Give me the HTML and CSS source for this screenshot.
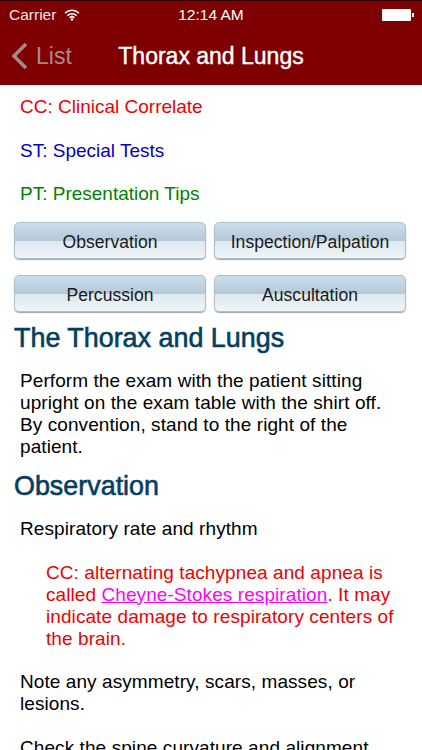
FILE: index.html
```html
<!DOCTYPE html>
<html lang="en">
<head>
<meta charset="utf-8">
<title>Thorax and Lungs</title>
<link rel="stylesheet" href="styles.css">
</head>
<body>
<div class="screen">
  <header class="top">
    <div class="status">
      <div class="status-left">
        <span>Carrier</span>
        <svg class="wifi" width="16" height="12" viewBox="0 0 16 12"><path d="M1 4.2a10 10 0 0 1 14 0M3.4 6.6a6.6 6.6 0 0 1 9.2 0M5.6 8.8a3.4 3.4 0 0 1 4.8 0" fill="none" stroke="#fff" stroke-width="1.5"/><path d="M8 12l-1.6-1.8a2.2 2.2 0 0 1 3.2 0z" fill="#fff"/></svg>
      </div>
      <span class="clock">12:14 AM</span>
      <div class="battery"><span class="cell"></span><span class="nub"></span></div>
    </div>
    <nav class="nav">
      <div class="back">
        <svg width="17" height="28" viewBox="0 0 17 28"><path d="M15 2L3 14l12 12" fill="none" stroke="#a88a8a" stroke-width="3.4"/></svg>
        <span>List</span>
      </div>
      <h1>Thorax and Lungs</h1>
    </nav>
  </header>
  <main class="content">
    <p class="key red">CC: Clinical Correlate</p>
    <p class="key blue">ST: Special Tests</p>
    <p class="key green">PT: Presentation Tips</p>
    <div class="buttons">
      <a class="btn">Observation</a>
      <a class="btn">Inspection/Palpation</a>
      <a class="btn">Percussion</a>
      <a class="btn">Auscultation</a>
    </div>
    <h2 class="first">The Thorax and Lungs</h2>
    <p class="body">Perform the exam with the patient sitting upright on the exam table with the shirt off. By convention, stand to the right of the patient.</p>
    <h2>Observation</h2>
    <p class="body">Respiratory rate and rhythm</p>
    <p class="body note">CC: alternating tachypnea and apnea is called <a class="link">Cheyne-Stokes respiration</a>. It may indicate damage to respiratory centers of the brain.</p>
    <p class="body">Note any asymmetry, scars, masses, or lesions.</p>
    <p class="body">Check the spine curvature and alignment</p>
  </main>
</div>
</body>
</html>
```
FILE: styles.css
```css
* { box-sizing: border-box; }
html, body { margin: 0; padding: 0; }
body { background: #fff; font-family: "Liberation Sans", Arial, sans-serif; }
.screen { width: 422px; height: 750px; overflow: hidden; background: #fff; }
.top { height: 85px; background: #7f0000; border-top: 1px solid #2a0000; color: #fff; }
.status { height: 27px; display: flex; justify-content: space-between; align-items: center; padding: 0 8px 0 9px; position: relative; font-size: 15.5px; }
.status-left { display: flex; align-items: center; gap: 8px; color: #f0e4e4; }
.clock { position: absolute; left: 0; right: 0; text-align: center; top: 5px; }
.battery { display: flex; align-items: center; }
.cell { width: 29px; height: 12px; background: #fff; border-radius: 1px; }
.nub { width: 2px; height: 4px; background: #fff; margin-left: 1px; }
.nav { height: 57px; display: flex; align-items: center; position: relative; padding: 0 0 1px 11px; }
.back { display: flex; align-items: center; gap: 8px; color: #a88a8a; font-size: 23px; }
.nav h1 { position: absolute; left: 0; right: 0; margin: 0; text-align: center; font-size: 23px; font-weight: 400; -webkit-text-stroke: 0.4px #fff; }
.content { padding: 11px 20px 0 20px; color: #000; }
.key { margin: 0 0 22px; font-size: 19px; line-height: 21.5px; }
.red { color: #f00000; }
.blue { color: #0000c8; }
.green { color: #008000; }
.buttons { display: grid; grid-template-columns: 192px 192px; column-gap: 8px; row-gap: 16px; margin: -5px 0 0 -6px; }
.btn { height: 37px; display: flex; align-items: center; justify-content: center; color: #1a1a1a; font-size: 17.5px; letter-spacing: 0.05px; padding-top: 5px; border: 1px solid #aebecb; border-radius: 5px; box-shadow: 0 1px 1px #9aa5ad; background: linear-gradient(#cbdeec 0%, #b4c9d9 50%, #dde8ef 52%, #eff5f8 100%); }
h2 { margin: -9px 0 16px -6px; color: #043e60; font-size: 26.9px; line-height: 31px; font-weight: 400; -webkit-text-stroke: 0.6px #043e60; }
h2.first { margin-top: 11px; }
.body { margin: 0 0 22px; font-size: 19px; line-height: 22px; letter-spacing: 0.08px; }
.note { color: #f00000; margin: 0 0 21px 26px; }
.link { color: #ff00ff; text-decoration: underline; }
```
